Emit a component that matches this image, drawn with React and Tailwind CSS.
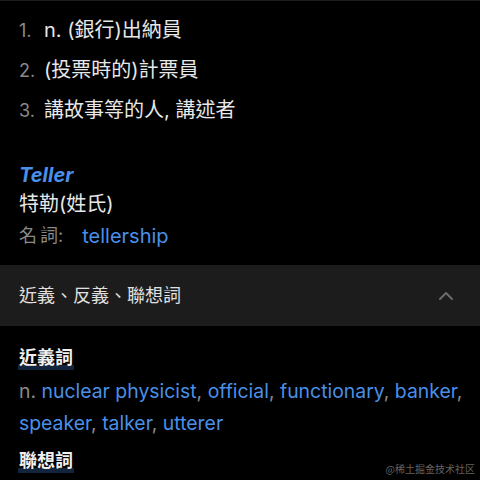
import React from "react";

const font = { fontFamily: '"Inter", "Noto Sans CJK TC", sans-serif' };

export default function App() {
  return (
    <div className="w-[480px] h-[480px] bg-black overflow-hidden relative text-[20px]" style={font}>
      <div className="h-px bg-[#1c1c1c]" />
      <div className="pl-[19px] pt-[16px] flex flex-col gap-[14px] text-[#e8e8e8]">
        <div className="flex items-center h-[26px]"><span className="w-[25px] text-[#8a8a8a] text-[18px]">1.</span><span>n. (銀行)出納員</span></div>
        <div className="flex items-center h-[26px]"><span className="w-[25px] text-[#8a8a8a] text-[18px]">2.</span><span>(投票時的)計票員</span></div>
        <div className="flex items-center h-[26px]"><span className="w-[25px] text-[#8a8a8a] text-[18px]">3.</span><span>講故事等的人, 講述者</span></div>
      </div>
      <div className="pl-[19px] mt-[39px]">
        <div className="text-[#4a8fe8] italic font-bold leading-[26px]">Teller</div>
        <div className="text-[#e8e8e8] leading-[30px] mt-[1px]">特勒(姓氏)</div>
        <div className="flex items-center leading-[34px]">
          <span className="text-[#8a8a8a] text-[18px]"><span className="mr-[3px]">名</span>詞:</span>
          <span className="ml-[19px] text-[#4a8fe8]">tellership</span>
        </div>
      </div>
      <div className="mt-[12px] h-[61px] bg-[#1c1c1c] flex items-center justify-between pl-[19px] pr-[26px]">
        <span className="text-[#e0e0e0] text-[18px]">近義、反義、聯想詞</span>
        <svg width="16" height="10" viewBox="0 0 16 10" fill="none" stroke="#6b6b6b" strokeWidth="2" strokeLinecap="round" strokeLinejoin="round">
          <path d="M2 8 L8 2 L14 8" />
        </svg>
      </div>
      <div className="pl-[19px] pt-[16px]">
        <div className="relative inline-block font-bold text-[#f0f0f0] text-[18px] leading-[26px]">
          <span className="absolute -left-px -right-px bottom-[1px] h-[5px] bg-[#13243d]" />
          <span className="relative">近義詞</span>
        </div>
        <div className="mt-[3px] leading-[32px] text-[19.4px]">
          <span className="text-[#8a8a8a]">n. </span>
          <span className="text-[#4a8fe8]">nuclear physicist</span><span className="text-[#8a8a8a]">, </span>
          <span className="text-[#4a8fe8]">official</span><span className="text-[#8a8a8a]">, </span>
          <span className="text-[#4a8fe8]">functionary</span><span className="text-[#8a8a8a]">, </span>
          <span className="text-[#4a8fe8]">banker</span><span className="text-[#8a8a8a]">, </span>
          <span className="text-[#4a8fe8]">speaker</span><span className="text-[#8a8a8a]">, </span>
          <span className="text-[#4a8fe8]">talker</span><span className="text-[#8a8a8a]">, </span>
          <span className="text-[#4a8fe8]">utterer</span>
        </div>
        <div className="mt-[9px] relative inline-block font-bold text-[#f0f0f0] text-[18px] leading-[26px]">
          <span className="absolute -left-px -right-px bottom-[1px] h-[5px] bg-[#13243d]" />
          <span className="relative">聯想詞</span>
        </div>
      </div>
      <div className="absolute right-[5px] bottom-[4px] text-[10px] text-[#626262]" style={{ fontFamily: '"Noto Sans CJK SC", serif' }}>@稀土掘金技术社区</div>
    </div>
  );
}
